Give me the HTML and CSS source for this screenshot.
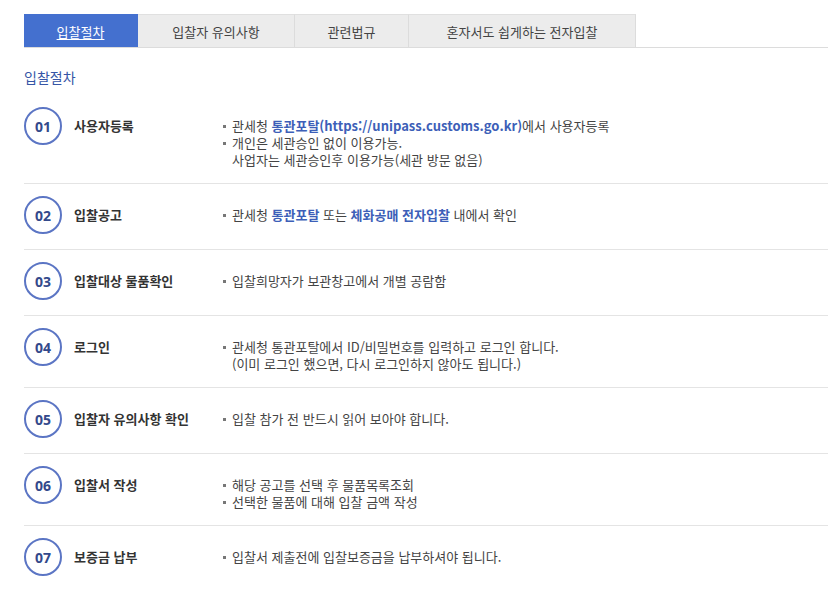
FILE: index.html
```html
<!DOCTYPE html>
<html lang="ko">
<head>
<meta charset="utf-8">
<title>입찰절차</title>
<link rel="stylesheet" href="styles.css">
</head>
<body>
<div class="page">
  <ul class="tabs">
    <li class="tab tab-1 active"><a href="#">입찰절차</a></li>
    <li class="tab tab-2"><a href="#">입찰자 유의사항</a></li>
    <li class="tab tab-3"><a href="#">관련법규</a></li>
    <li class="tab tab-4"><a href="#">혼자서도 쉽게하는 전자입찰</a></li>
  </ul>

  <h2 class="heading">입찰절차</h2>

  <ol class="steps">
    <li class="step">
      <span class="num">01</span>
      <span class="title">사용자등록</span>
      <ul class="desc">
        <li>관세청 <b class="link">통관포탈(https://unipass.customs.go.kr)</b>에서 사용자등록</li>
        <li>개인은 세관승인 없이 이용가능.<br>사업자는 세관승인후 이용가능(세관 방문 없음)</li>
      </ul>
    </li>
    <li class="step">
      <span class="num">02</span>
      <span class="title">입찰공고</span>
      <ul class="desc">
        <li>관세청 <b class="link">통관포탈</b> 또는 <b class="link">체화공매 전자입찰</b> 내에서 확인</li>
      </ul>
    </li>
    <li class="step">
      <span class="num">03</span>
      <span class="title">입찰대상 물품확인</span>
      <ul class="desc">
        <li>입찰희망자가 보관창고에서 개별 공람함</li>
      </ul>
    </li>
    <li class="step">
      <span class="num">04</span>
      <span class="title">로그인</span>
      <ul class="desc">
        <li>관세청 통관포탈에서 ID/비밀번호를 입력하고 로그인 합니다.<br>(이미 로그인 했으면, 다시 로그인하지 않아도 됩니다.)</li>
      </ul>
    </li>
    <li class="step">
      <span class="num">05</span>
      <span class="title">입찰자 유의사항 확인</span>
      <ul class="desc">
        <li>입찰 참가 전 반드시 읽어 보아야 합니다.</li>
      </ul>
    </li>
    <li class="step">
      <span class="num">06</span>
      <span class="title">입찰서 작성</span>
      <ul class="desc">
        <li>해당 공고를 선택 후 물품목록조회</li>
        <li>선택한 물품에 대해 입찰 금액 작성</li>
      </ul>
    </li>
    <li class="step">
      <span class="num">07</span>
      <span class="title">보증금 납부</span>
      <ul class="desc">
        <li>입찰서 제출전에 입찰보증금을 납부하셔야 됩니다.</li>
      </ul>
    </li>
  </ol>
</div>
</body>
</html>
```

FILE: styles.css
```css
html, body {
  margin: 0;
  padding: 0;
  background: #fff;
}
body {
  font-family: "Noto Sans CJK KR", "Noto Sans", sans-serif;
  font-size: 13px;
  color: #333;
  overflow: hidden;
}
.page {
  padding: 14px 0 0 24px;
}
ul, ol {
  list-style: none;
  margin: 0;
  padding: 0;
}
.tabs {
  display: flex;
  border-bottom: 1px solid #dcdcdc;
  height: 33px;
}
.tab {
  box-sizing: border-box;
  height: 33px;
  background: #ececec;
  border-top: 1px solid #e0e0e0;
  border-right: 1px solid #dcdcdc;
  display: flex;
  align-items: center;
  justify-content: center;
}
.tab a {
  color: #444;
  text-decoration: none;
  font-size: 13px;
}
.tab-1 { width: 114px; }
.tab-2 { width: 157px; }
.tab-3 { width: 114px; }
.tab-4 { width: 227px; }
.tab.active {
  background: #4470cf;
  border-color: #4470cf;
}
.tab.active a {
  color: #fff;
  text-decoration: underline;
  text-underline-offset: 2px;
}
.heading {
  margin: 0;
  padding-top: 19px;
  height: 28px;
  font-size: 14px;
  font-weight: normal;
  line-height: 20px;
  color: #3655a6;
}
.steps {
  display: flex;
  flex-direction: column;
}
.step {
  display: flex;
  align-items: flex-start;
  padding: 12px 0 15px;
  border-bottom: 1px solid #e4e4e4;
  line-height: 17px;
}
.step:last-child {
  border-bottom: none;
}
.num {
  box-sizing: border-box;
  flex: none;
  width: 38px;
  height: 38px;
  border: 2px solid #5b75c4;
  border-radius: 50%;
  display: flex;
  align-items: center;
  justify-content: center;
  font-family: "Noto Sans", sans-serif;
  font-weight: bold;
  font-size: 14px;
  color: #33498b;
}
.title {
  flex: none;
  width: 148px;
  margin-left: 12px;
  padding-top: 10px;
  font-weight: bold;
  color: #333;
}
.desc {
  padding-top: 10px;
}
.desc li {
  position: relative;
  padding-left: 10px;
  color: #444;
}
.desc li::before {
  content: "";
  position: absolute;
  left: 1px;
  top: 8px;
  width: 3px;
  height: 3px;
  background: #777;
}
.link {
  color: #3d5fb8;
  font-weight: bold;
}
```
